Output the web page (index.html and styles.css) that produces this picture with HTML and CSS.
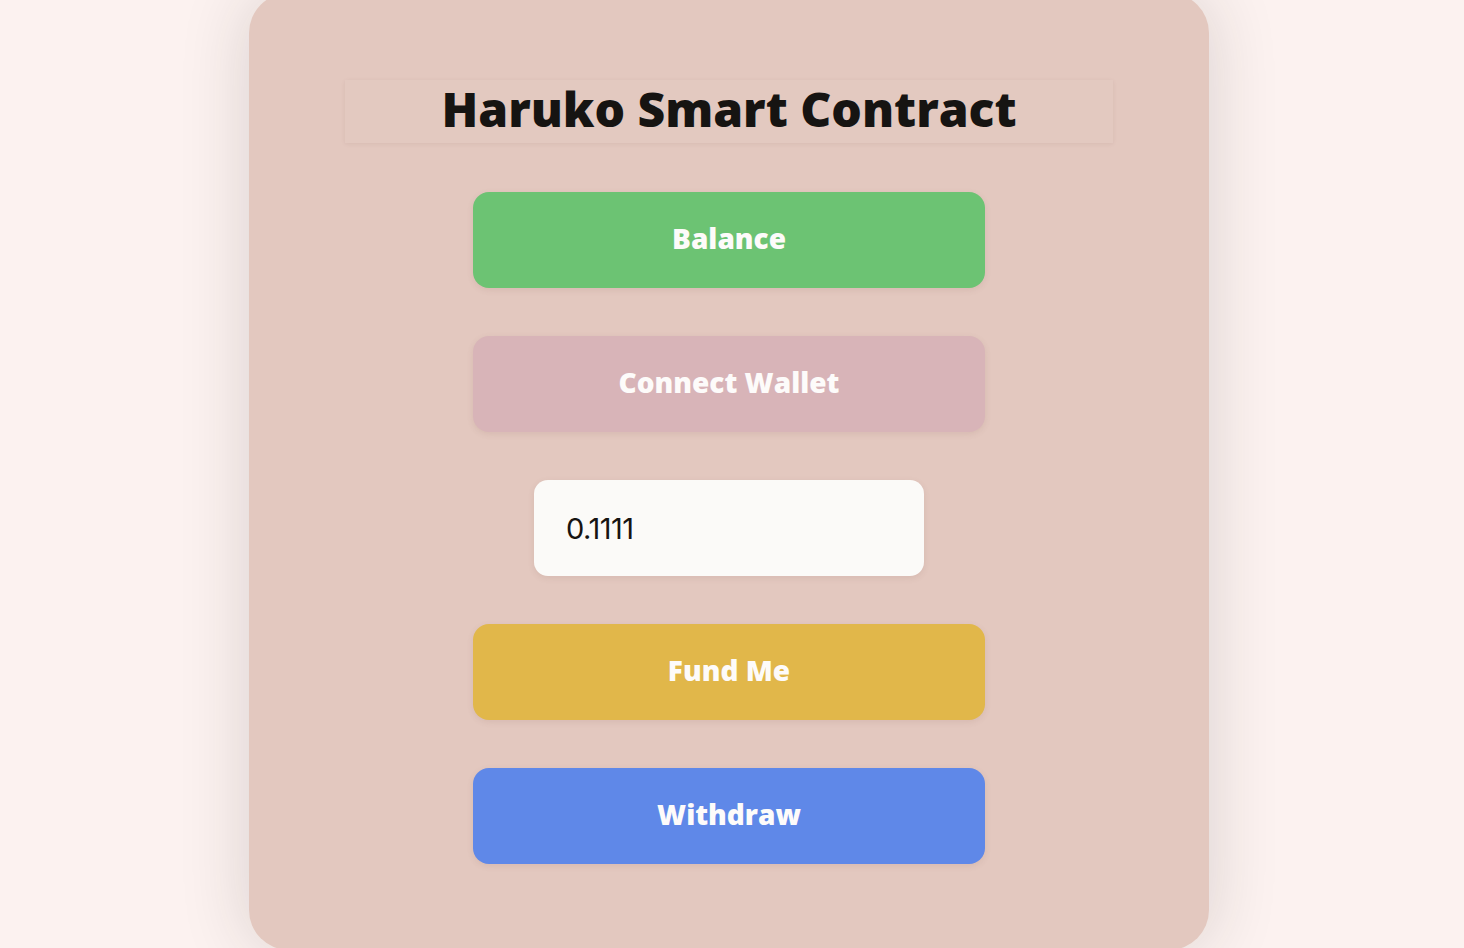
FILE: index.html
```html
<!DOCTYPE html>
<html lang="en">
<head>
<meta charset="utf-8">
<title>Haruko Smart Contract</title>
<link rel="stylesheet" href="styles.css">
</head>
<body>
<main class="card">
  <div class="title-box">
    <h1 class="title">Haruko Smart Contract</h1>
  </div>
  <div class="actions">
    <button class="btn btn-balance">Balance</button>
    <button class="btn btn-connect">Connect Wallet</button>
    <input class="amount" type="text" value="0.1111">
    <button class="btn btn-fund">Fund Me</button>
    <button class="btn btn-withdraw">Withdraw</button>
  </div>
</main>
</body>
</html>
```

FILE: styles.css
```css
html, body {
  margin: 0;
  padding: 0;
}
body {
  background: #fcf2f0;
  font-family: "Open Sans", "Noto Sans", sans-serif;
  height: 948px;
  overflow: hidden;
  box-sizing: border-box;
  padding-right: 6px;
}
.card {
  width: 960px;
  box-sizing: border-box;
  margin: -7px auto 0;
  height: 957px;
  padding-top: 87px;
  background: #e3c8bf;
  border-radius: 40px;
  box-shadow: 0 0 70px rgba(40, 35, 30, 0.16);
  display: flex;
  flex-direction: column;
  align-items: center;
}
.title-box {
  width: 768px;
  height: 63px;
  box-sizing: border-box;
  display: flex;
  align-items: center;
  justify-content: center;
  padding-bottom: 5px;
  box-shadow: 0 1px 4px rgba(120, 80, 70, 0.10);
  background: #e3c9c0;
}
.title {
  margin: 0;
  font-size: 48px;
  font-weight: 800;
  color: #161412;
  letter-spacing: 0;
  line-height: 1;
}
.actions {
  margin-top: 49px;
  display: flex;
  flex-direction: column;
  align-items: center;
  gap: 48px;
}
.btn {
  width: 512px;
  height: 96px;
  border: none;
  border-radius: 16px;
  color: #fdfbfa;
  font-family: "Open Sans", "Noto Sans", sans-serif;
  font-size: 28px;
  font-weight: 800;
  padding: 0 0 4px;
  box-shadow: 0 2px 6px rgba(120, 80, 70, 0.12);
  cursor: pointer;
}
.btn-balance { background: #6cc373; }
.btn-connect { background: #d8b4b8; }
.btn-fund { background: #e1b74a; }
.btn-withdraw { background: #5f88e8; }
.amount {
  width: 390px;
  height: 96px;
  box-sizing: border-box;
  border: none;
  border-radius: 14px;
  background: #fbfaf8;
  padding: 0 32px;
  font-family: "Inter", "Open Sans", sans-serif;
  font-variant-numeric: proportional-nums;
  font-size: 29px;
  letter-spacing: -0.5px;
  color: #161412;
  box-shadow: 0 2px 6px rgba(120, 80, 70, 0.12);
  outline: none;
}
```
